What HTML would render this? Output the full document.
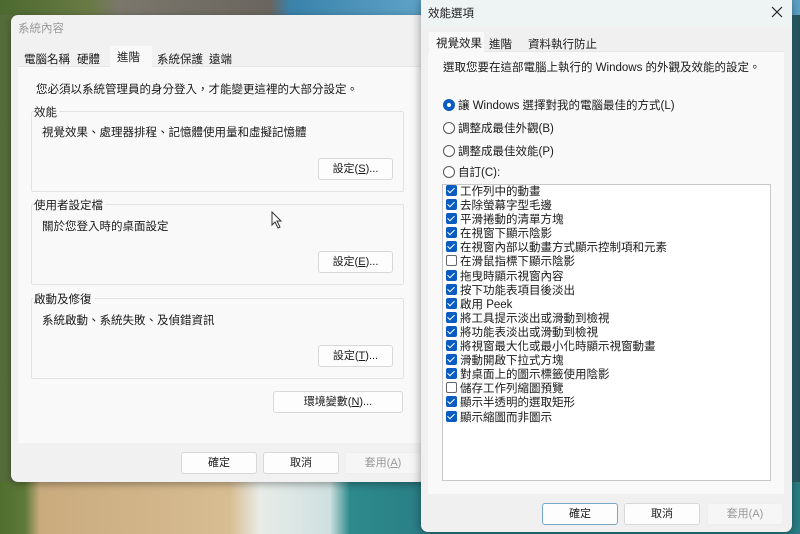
<!DOCTYPE html>
<html><head><meta charset="utf-8"><style>
*{box-sizing:border-box;margin:0;padding:0}
body{width:800px;height:534px;overflow:hidden;position:relative;font-family:"Liberation Sans","Noto Sans CJK TC",sans-serif;font-size:11.5px;color:#1a1a1a;
background:linear-gradient(90deg,#556b3a 0,#6d7a4a 90px,#7b7a70 130px,#6e6c66 260px,#3f7fa0 290px,#5c9ab8 420px,#2f6f78 790px,#24505a 800px)}
.a{position:absolute;white-space:nowrap}
.btn{position:absolute;background:#fdfdfd;border:1px solid #d8d8d8;border-radius:3px;text-align:center;line-height:20px;font-size:11px}
.gb{position:absolute;border:1px solid #e2e2e2;border-radius:2px}
.cb{display:inline-block;width:11px;height:11px;border-radius:2px;background:#0a5cc0;vertical-align:-1px;margin-right:3px;position:relative}
.cb:after{content:"";position:absolute;left:3px;top:1px;width:3px;height:6px;border:solid #fff;border-width:0 1.3px 1.3px 0;transform:rotate(45deg)}
.cb.off{background:#fff;border:1px solid #666}.cb.off:after{display:none}
.rd{display:inline-block;width:12px;height:12px;border-radius:50%;border:1px solid #555;vertical-align:-2px;margin-right:3px;background:#fff}
</style></head><body>
<!-- bottom background -->
<div class="a" style="left:0;top:482px;width:800px;height:52px;background:linear-gradient(90deg,#4f6e2e 0,#5f7a3a 25px,#c9ab7e 40px,#d8bd92 230px,#e8ece8 260px,#cfe0e0 330px,#2c8a8c 350px,#2a7f86 420px)"></div>
<div class="a" style="left:0;top:0;width:800px;height:15px;background:linear-gradient(90deg,#4c6a30 0,#6a7a45 90px,#7b776c 120px,#6a655e 270px,#3a82aa 290px,#5ea3c8 420px)"></div>

<!-- left window -->
<div class="a" style="left:11px;top:15px;width:415px;height:467px;background:#f1f1f1;border-radius:7px;box-shadow:0 2px 8px rgba(0,0,0,.35)"></div>
<div class="a" style="left:18px;top:20px;color:#999;font-size:11.5px">系統內容</div>
<div class="a" style="left:18px;top:66px;width:404px;height:377px;background:#f9f9f9;border-top:1px solid #e6e6e6"></div>
<div class="a" style="left:24px;top:51px">電腦名稱</div>
<div class="a" style="left:77px;top:51px">硬體</div>
<div class="a" style="left:110px;top:46px;width:42px;height:21px;background:#f9f9f9"></div>
<div class="a" style="left:117px;top:49px">進階</div>
<div class="a" style="left:157px;top:51px">系統保護</div>
<div class="a" style="left:209px;top:51px">遠端</div>
<div class="a" style="left:36px;top:81px">您必須以系統管理員的身分登入，才能變更這裡的大部分設定。</div>

<div class="gb" style="left:31px;top:111px;width:373px;height:81px"></div>
<div class="a" style="left:34px;top:104px;background:#f9f9f9;padding-right:2px">效能</div>
<div class="a" style="left:42px;top:124px">視覺效果、處理器排程、記憶體使用量和虛擬記憶體</div>
<div class="btn" style="left:318px;top:158px;width:75px;height:22px">設定(<u>S</u>)...</div>

<div class="gb" style="left:31px;top:204px;width:373px;height:81px"></div>
<div class="a" style="left:34px;top:197px;background:#f9f9f9;padding-right:2px">使用者設定檔</div>
<div class="a" style="left:42px;top:218px">關於您登入時的桌面設定</div>
<div class="btn" style="left:318px;top:251px;width:75px;height:22px">設定(<u>E</u>)...</div>

<div class="gb" style="left:31px;top:298px;width:373px;height:81px"></div>
<div class="a" style="left:34px;top:291px;background:#f9f9f9;padding-right:2px">啟動及修復</div>
<div class="a" style="left:42px;top:312px">系統啟動、系統失敗、及偵錯資訊</div>
<div class="btn" style="left:318px;top:345px;width:75px;height:22px">設定(<u>T</u>)...</div>
<div class="btn" style="left:273px;top:391px;width:130px;height:22px">環境變數(<u>N</u>)...</div>

<div class="btn" style="left:181px;top:452px;width:76px;height:22px">確定</div>
<div class="btn" style="left:263px;top:452px;width:76px;height:22px">取消</div>
<div class="btn" style="left:345px;top:452px;width:76px;height:22px;color:#999;background:#f6f6f6;border-color:#eee">套用(<u>A</u>)</div>
<svg class="a" style="left:271px;top:211px" width="12" height="18"><path d="M1 1 L1 14 L4 11 L7 17 L9 16 L6 10 L10 10 Z" fill="#fff" stroke="#333" stroke-width="1"/></svg>

<!-- right window -->
<div class="a" style="left:421px;top:-5px;width:371px;height:537px;background:#f0f0f0;border-radius:7px;box-shadow:0 2px 10px rgba(0,0,0,.4)"></div>
<div class="a" style="left:421px;top:0;width:371px;height:26px;background:#eef3f4"></div>
<div class="a" style="left:428px;top:5px;font-size:11.5px">效能選項</div>
<svg class="a" style="left:771px;top:6px" width="12" height="12"><path d="M1 1L11 11M11 1L1 11" stroke="#222" stroke-width="1.2"/></svg>
<div class="a" style="left:428px;top:51px;width:356px;height:443px;background:#f9f9f9;border-top:1px solid #e6e6e6"></div>
<div class="a" style="left:429px;top:32px;width:55px;height:20px;background:#f9f9f9"></div>
<div class="a" style="left:436px;top:35px">視覺效果</div>
<div class="a" style="left:489px;top:36px">進階</div>
<div class="a" style="left:528px;top:36px">資料執行防止</div>
<div class="a" style="left:443px;top:59px">選取您要在這部電腦上執行的 Windows 的外觀及效能的設定。</div>
<div class="a" style="left:443px;top:97px"><span class="rd" style="border:4px solid #0a5cc0"></span>讓 Windows 選擇對我的電腦最佳的方式(L)</div>
<div class="a" style="left:443px;top:120px"><span class="rd"></span>調整成最佳外觀(B)</div>
<div class="a" style="left:443px;top:143px"><span class="rd"></span>調整成最佳效能(P)</div>
<div class="a" style="left:443px;top:164px"><span class="rd"></span>自訂(C):</div>
<div class="a" style="left:442px;top:184px;width:329px;height:297px;background:#fff;border:1px solid #c8c8c8"></div>
<div class="a" style="left:446px;top:185px;line-height:14.1px">
<div><span class="cb"></span>工作列中的動畫</div>
<div><span class="cb"></span>去除螢幕字型毛邊</div>
<div><span class="cb"></span>平滑捲動的清單方塊</div>
<div><span class="cb"></span>在視窗下顯示陰影</div>
<div><span class="cb"></span>在視窗內部以動畫方式顯示控制項和元素</div>
<div><span class="cb off"></span>在滑鼠指標下顯示陰影</div>
<div><span class="cb"></span>拖曳時顯示視窗內容</div>
<div><span class="cb"></span>按下功能表項目後淡出</div>
<div><span class="cb"></span>啟用 Peek</div>
<div><span class="cb"></span>將工具提示淡出或滑動到檢視</div>
<div><span class="cb"></span>將功能表淡出或滑動到檢視</div>
<div><span class="cb"></span>將視窗最大化或最小化時顯示視窗動畫</div>
<div><span class="cb"></span>滑動開啟下拉式方塊</div>
<div><span class="cb"></span>對桌面上的圖示標籤使用陰影</div>
<div><span class="cb off"></span>儲存工作列縮圖預覽</div>
<div><span class="cb"></span>顯示半透明的選取矩形</div>
<div><span class="cb"></span>顯示縮圖而非圖示</div>
</div>
<div class="btn" style="left:542px;top:503px;width:76px;height:22px;border-color:#7aa6c8">確定</div>
<div class="btn" style="left:624px;top:503px;width:76px;height:22px">取消</div>
<div class="btn" style="left:707px;top:503px;width:76px;height:22px;color:#999;background:#f6f6f6;border-color:#eee">套用(A)</div>
</body></html>
